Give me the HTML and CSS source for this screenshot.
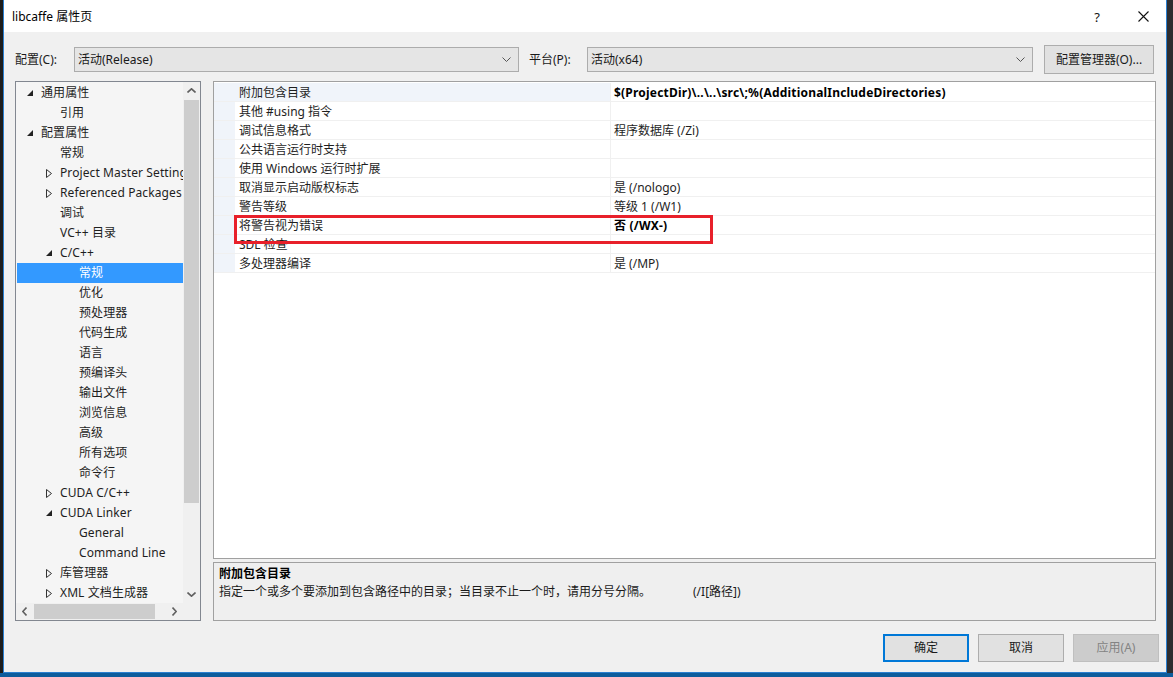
FILE: index.html
```
<!DOCTYPE html>
<html lang="zh-CN">
<head>
<meta charset="utf-8">
<title>libcaffe 属性页</title>
<link rel="stylesheet" href="styles.css">
</head>
<body>
<div class="screen">
  <div class="desk">
    <div class="dialog">
      <div class="titlebar">
        <div class="title">libcaffe 属性页</div>
        <div class="caption">
          <div class="cap-btn help">?</div>
          <div class="cap-btn close">
            <svg width="11" height="11" viewBox="0 0 11 11"><path d="M0.5 0.5 L10.5 10.5 M10.5 0.5 L0.5 10.5" stroke="#111" stroke-width="1.1" fill="none"/></svg>
          </div>
        </div>
      </div>

      <div class="content">
        <div class="config-row">
          <span class="lbl lbl-config">配置(C):</span>
          <div class="combo combo-config"><span>活动(Release)</span>
            <svg class="chev" width="9" height="5" viewBox="0 0 9 5"><path d="M0.5 0.5 L4.5 4.5 L8.5 0.5" stroke="#555" stroke-width="1" fill="none"/></svg>
          </div>
          <span class="lbl lbl-platform">平台(P):</span>
          <div class="combo combo-platform"><span>活动(x64)</span>
            <svg class="chev" width="9" height="5" viewBox="0 0 9 5"><path d="M0.5 0.5 L4.5 4.5 L8.5 0.5" stroke="#555" stroke-width="1" fill="none"/></svg>
          </div>
          <div class="btn btn-manager">配置管理器(O)...</div>
        </div>

        <div class="main">
          <div class="tree">
            <div class="tree-body">
              <div class="tree-items">
                <div class="node"><span class="ind l0"></span><span class="exp"><svg width="6" height="6" viewBox="0 0 6 6"><path d="M6 0 L6 6 L0 6 Z" fill="#222"/></svg></span><span class="txt">通用属性</span></div>
                <div class="node"><span class="ind l1"></span><span class="exp"></span><span class="txt">引用</span></div>
                <div class="node"><span class="ind l0"></span><span class="exp"><svg width="6" height="6" viewBox="0 0 6 6"><path d="M6 0 L6 6 L0 6 Z" fill="#222"/></svg></span><span class="txt">配置属性</span></div>
                <div class="node"><span class="ind l1"></span><span class="exp"></span><span class="txt">常规</span></div>
                <div class="node"><span class="ind l1"></span><span class="exp"><svg width="6" height="9" viewBox="0 0 6 9"><path d="M0.5 0.5 L5.5 4.5 L0.5 8.5 Z" fill="none" stroke="#333" stroke-width="1"/></svg></span><span class="txt">Project Master Settings</span></div>
                <div class="node"><span class="ind l1"></span><span class="exp"><svg width="6" height="9" viewBox="0 0 6 9"><path d="M0.5 0.5 L5.5 4.5 L0.5 8.5 Z" fill="none" stroke="#333" stroke-width="1"/></svg></span><span class="txt">Referenced Packages</span></div>
                <div class="node"><span class="ind l1"></span><span class="exp"></span><span class="txt">调试</span></div>
                <div class="node"><span class="ind l1"></span><span class="exp"></span><span class="txt">VC++ 目录</span></div>
                <div class="node"><span class="ind l1"></span><span class="exp"><svg width="6" height="6" viewBox="0 0 6 6"><path d="M6 0 L6 6 L0 6 Z" fill="#222"/></svg></span><span class="txt">C/C++</span></div>
                <div class="node selected"><span class="ind l2"></span><span class="exp"></span><span class="txt">常规</span></div>
                <div class="node"><span class="ind l2"></span><span class="exp"></span><span class="txt">优化</span></div>
                <div class="node"><span class="ind l2"></span><span class="exp"></span><span class="txt">预处理器</span></div>
                <div class="node"><span class="ind l2"></span><span class="exp"></span><span class="txt">代码生成</span></div>
                <div class="node"><span class="ind l2"></span><span class="exp"></span><span class="txt">语言</span></div>
                <div class="node"><span class="ind l2"></span><span class="exp"></span><span class="txt">预编译头</span></div>
                <div class="node"><span class="ind l2"></span><span class="exp"></span><span class="txt">输出文件</span></div>
                <div class="node"><span class="ind l2"></span><span class="exp"></span><span class="txt">浏览信息</span></div>
                <div class="node"><span class="ind l2"></span><span class="exp"></span><span class="txt">高级</span></div>
                <div class="node"><span class="ind l2"></span><span class="exp"></span><span class="txt">所有选项</span></div>
                <div class="node"><span class="ind l2"></span><span class="exp"></span><span class="txt">命令行</span></div>
                <div class="node"><span class="ind l1"></span><span class="exp"><svg width="6" height="9" viewBox="0 0 6 9"><path d="M0.5 0.5 L5.5 4.5 L0.5 8.5 Z" fill="none" stroke="#333" stroke-width="1"/></svg></span><span class="txt">CUDA C/C++</span></div>
                <div class="node"><span class="ind l1"></span><span class="exp"><svg width="6" height="6" viewBox="0 0 6 6"><path d="M6 0 L6 6 L0 6 Z" fill="#222"/></svg></span><span class="txt">CUDA Linker</span></div>
                <div class="node"><span class="ind l2"></span><span class="exp"></span><span class="txt">General</span></div>
                <div class="node"><span class="ind l2"></span><span class="exp"></span><span class="txt">Command Line</span></div>
                <div class="node"><span class="ind l1"></span><span class="exp"><svg width="6" height="9" viewBox="0 0 6 9"><path d="M0.5 0.5 L5.5 4.5 L0.5 8.5 Z" fill="none" stroke="#333" stroke-width="1"/></svg></span><span class="txt">库管理器</span></div>
                <div class="node"><span class="ind l1"></span><span class="exp"><svg width="6" height="9" viewBox="0 0 6 9"><path d="M0.5 0.5 L5.5 4.5 L0.5 8.5 Z" fill="none" stroke="#333" stroke-width="1"/></svg></span><span class="txt">XML 文档生成器</span></div>
              </div>
              <div class="vscroll">
                <div class="sb-btn"><svg width="9" height="5" viewBox="0 0 9 5"><path d="M0.5 4.5 L4.5 0.8 L8.5 4.5" stroke="#606060" stroke-width="1.6" fill="none"/></svg></div>
                <div class="vthumb"></div>
                <div class="sb-fill"></div>
                <div class="sb-btn"><svg width="9" height="5" viewBox="0 0 9 5"><path d="M0.5 0.5 L4.5 4.2 L8.5 0.5" stroke="#606060" stroke-width="1.6" fill="none"/></svg></div>
              </div>
            </div>
            <div class="hscroll-row">
              <div class="hscroll">
                <div class="sb-btn"><svg width="5" height="9" viewBox="0 0 5 9"><path d="M4.5 0.5 L0.8 4.5 L4.5 8.5" stroke="#606060" stroke-width="1.6" fill="none"/></svg></div>
                <div class="hthumb"></div>
                <div class="sb-fill"></div>
                <div class="sb-btn"><svg width="5" height="9" viewBox="0 0 5 9"><path d="M0.5 0.5 L4.2 4.5 L0.5 8.5" stroke="#606060" stroke-width="1.6" fill="none"/></svg></div>
              </div>
              <div class="corner"></div>
            </div>
          </div>

          <div class="right">
            <div class="grid">
              <div class="prow active"><span class="gut"></span><span class="pname">附加包含目录</span><span class="pval bold">$(ProjectDir)\..\..\src\;%(AdditionalIncludeDirectories)</span></div>
              <div class="prow"><span class="gut"></span><span class="pname">其他 #using 指令</span><span class="pval"></span></div>
              <div class="prow"><span class="gut"></span><span class="pname">调试信息格式</span><span class="pval">程序数据库 (/Zi)</span></div>
              <div class="prow"><span class="gut"></span><span class="pname">公共语言运行时支持</span><span class="pval"></span></div>
              <div class="prow"><span class="gut"></span><span class="pname">使用 Windows 运行时扩展</span><span class="pval"></span></div>
              <div class="prow"><span class="gut"></span><span class="pname">取消显示启动版权标志</span><span class="pval">是 (/nologo)</span></div>
              <div class="prow"><span class="gut"></span><span class="pname">警告等级</span><span class="pval">等级 1 (/W1)</span></div>
              <div class="prow"><span class="gut"></span><span class="pname">将警告视为错误</span><span class="pval bold">否 (/WX-)</span></div>
              <div class="prow"><span class="gut"></span><span class="pname">SDL 检查</span><span class="pval"></span></div>
              <div class="prow"><span class="gut"></span><span class="pname">多处理器编译</span><span class="pval">是 (/MP)</span></div>
              <div class="mark"></div>
            </div>
            <div class="desc">
              <div class="desc-title">附加包含目录</div>
              <div class="desc-text"><span>指定一个或多个要添加到包含路径中的目录；当目录不止一个时，请用分号分隔。</span><span class="desc-flag">(/I[路径])</span></div>
            </div>
          </div>
        </div>

        <div class="buttons">
          <div class="btn dlg-btn default">确定</div>
          <div class="btn dlg-btn">取消</div>
          <div class="btn dlg-btn disabled">应用(A)</div>
        </div>
      </div>
    </div>
  </div>
  <div class="taskbar"></div>
</div>
</body>
</html>
```

FILE: styles.css
```
* { box-sizing: border-box; }

html, body {
  margin: 0;
  padding: 0;
  width: 1173px;
  height: 677px;
  overflow: hidden;
  background: #232325;
  font-family: "Noto Sans", "Noto Sans CJK SC", sans-serif;
  font-size: 12px;
  color: #1a1a1a;
}

.screen {
  display: flex;
  flex-direction: column;
  width: 1173px;
  height: 677px;
}

.desk {
  display: flex;
  height: 673px;
  background: linear-gradient(to right, #1c1c1c 0, #1c1c1c 3px, #2d2d30 3px);
}

.taskbar {
  height: 4px;
  background: #0d5c9c;
}

.dialog {
  margin-left: 3px;
  width: 1164px;
  height: 673px;
  border: 1px solid #2a7fd0;
  border-top: none;
  background: #f0f0f0;
  display: flex;
  flex-direction: column;
}

/* title bar */
.titlebar {
  height: 32px;
  background: #ffffff;
  display: flex;
  align-items: center;
  justify-content: space-between;
}
.title {
  padding-left: 8px;
  font-size: 12px;
  color: #000;
  line-height: 16px;
  padding-top: 1px;
}
.caption {
  display: flex;
  height: 32px;
}
.cap-btn {
  width: 46px;
  height: 32px;
  display: flex;
  align-items: center;
  justify-content: center;
}
.help {
  font-size: 13px;
  color: #111;
  padding-top: 1px;
}
.close svg { display: block; }

/* content */
.content {
  flex: 1;
  display: flex;
  flex-direction: column;
}

.config-row {
  display: flex;
  align-items: center;
  height: 29px;
  margin-top: 13px;
  padding-left: 11px;
}
.lbl {
  line-height: 16px;
  white-space: nowrap;
}
.lbl-config { width: 59px; }
.lbl-platform { width: 58px; margin-left: 10px; }

.combo {
  height: 25px;
  background: #e5e5e5;
  border: 1px solid #acacac;
  display: flex;
  align-items: center;
  justify-content: space-between;
  padding: 0 7px 0 3px;
  line-height: 16px;
}
.combo-config { width: 445px; }
.combo-platform { width: 446px; }
.chev { display: block; }

.btn {
  display: flex;
  align-items: center;
  justify-content: center;
  background: #e1e1e1;
  border: 1px solid #adadad;
  line-height: 16px;
  white-space: nowrap;
}
.btn-manager {
  width: 110px;
  height: 29px;
  margin-left: 11px;
}

/* main area */
.main {
  display: flex;
  margin-top: 7px;
  padding-left: 11px;
  height: 540px;
}

.tree {
  width: 186px;
  height: 540px;
  border: 1px solid #828790;
  display: flex;
  flex-direction: column;
  background: #f5f5f5;
}
.tree-body {
  display: flex;
  height: 521px;
}
.tree-items {
  width: 167px;
  overflow: hidden;
  padding: 1px 0 0 1px;
}
.node {
  height: 20px;
  display: flex;
  align-items: center;
  white-space: nowrap;
  line-height: 16px;
  color: #1e1e1e;
}
.node.selected {
  background: #3399ff;
  color: #ffffff;
}
.ind { flex: none; display: block; }
.ind.l0 { width: 0; }
.ind.l1 { width: 19px; }
.ind.l2 { width: 38px; }
.exp {
  flex: none;
  width: 24px;
  height: 20px;
  display: flex;
  align-items: center;
  padding-left: 10px;
}
.exp svg { display: block; }
.txt {
  white-space: nowrap;
  letter-spacing: 0.1px;
}

.vscroll {
  width: 17px;
  background: #f0f0f0;
  display: flex;
  flex-direction: column;
}
.sb-btn {
  flex: none;
  width: 17px;
  height: 17px;
  display: flex;
  align-items: center;
  justify-content: center;
}
.sb-btn svg { display: block; }
.vthumb {
  flex: none;
  width: 15px;
  height: 403px;
  margin: 1px 0 0 1px;
  background: #cdcdcd;
}
.sb-fill { flex: 1; }

.hscroll-row {
  display: flex;
  height: 17px;
}
.hscroll {
  width: 167px;
  display: flex;
  background: #f0f0f0;
}
.hthumb {
  flex: none;
  width: 121px;
  height: 15px;
  margin: 1px 0 0 1px;
  background: #cdcdcd;
}
.corner {
  width: 17px;
  background: #f0f0f0;
}

/* right column */
.right {
  margin-left: 12px;
  width: 943px;
  display: flex;
  flex-direction: column;
}

.grid {
  position: relative;
  height: 478px;
  background: #ffffff;
  border: 1px solid #a0a0a0;
  padding-top: 1px;
}
.prow {
  display: flex;
  height: 19px;
  border-bottom: 1px solid #f0f0f0;
  line-height: 16px;
}
.gut {
  flex: none;
  width: 21px;
  background: #f0f4fa;
}
.pname {
  flex: none;
  width: 376px;
  padding: 1px 0 0 4px;
  border-right: 1px solid #f0f0f0;
  white-space: nowrap;
  display: flex;
  align-items: center;
  color: #1e1e1e;
}
.prow.active .pname { background: #f0f4fa; }
.pval {
  flex: 1;
  padding: 1px 0 0 3px;
  white-space: nowrap;
  display: flex;
  align-items: center;
  color: #1e1e1e;
  font-weight: normal;
}
.pval.bold {
  font-weight: bold;
  color: #000;
  letter-spacing: 0.2px;
}

/* annotation box drawn over the grid */
.mark {
  position: absolute;
  left: 20px;
  top: 133px;
  width: 479px;
  height: 29px;
  border: 3px solid #e8202a;
}

.desc {
  margin-top: 3px;
  height: 59px;
  border: 1px solid #a0a0a0;
  background: #efefef;
  padding: 2px 0 0 5px;
  line-height: 18px;
}
.desc-title {
  font-weight: bold;
  color: #000;
}
.desc-text {
  display: flex;
  color: #1a1a1a;
}
.desc-flag { margin-left: 42px; }

/* dialog buttons */
.buttons {
  display: flex;
  justify-content: flex-end;
  margin-top: 13px;
  padding-right: 7px;
  gap: 9px;
}
.dlg-btn {
  width: 86px;
  height: 28px;
}
.dlg-btn.default {
  border: 2px solid #0078d7;
}
.dlg-btn.disabled {
  background: #cccccc;
  border-color: #bfbfbf;
  color: #838383;
}
```
